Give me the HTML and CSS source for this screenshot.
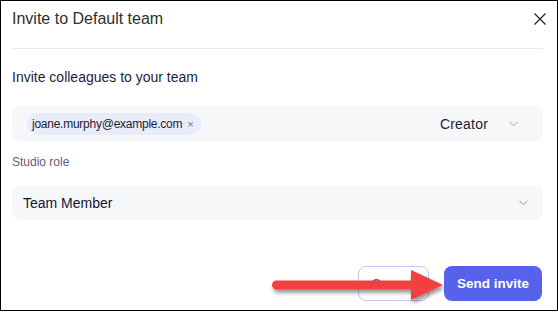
FILE: index.html
```html
<!DOCTYPE html>
<html>
<head>
<meta charset="utf-8">
<link rel="stylesheet" href="styles.css">
</head>
<body>
<div class="dialog">
  <div class="header">
    <h1 class="title">Invite to Default team</h1>
    <button class="close" aria-label="Close">
      <svg width="12" height="12" viewBox="0 0 12 12"><path d="M0.5 0.5 L11.5 11.5 M11.5 0.5 L0.5 11.5" stroke="#222" stroke-width="1.2" fill="none"/></svg>
    </button>
  </div>
  <div class="divider"></div>
  <p class="lead">Invite colleagues to your team</p>
  <div class="field invite-field">
    <span class="chip">joane.murphy@example.com <span class="chip-x">×</span></span>
    <span class="role">Creator</span>
    <svg class="chev chev1" width="9" height="6" viewBox="0 0 9 6"><path d="M0.5 0.8 L4.5 4.8 L8.5 0.8" stroke="#9aa0b0" stroke-width="1" fill="none"/></svg>
  </div>
  <p class="label">Studio role</p>
  <div class="field select-field">
    <span class="value">Team Member</span>
    <svg class="chev" width="9" height="6" viewBox="0 0 9 6"><path d="M0.5 0.8 L4.5 4.8 L8.5 0.8" stroke="#8a90a0" stroke-width="1" fill="none"/></svg>
  </div>
  <div class="footer">
    <button class="btn btn-cancel">Cancel</button>
    <button class="btn btn-send">Send invite</button>
  </div>
  <svg class="arrow" width="558" height="312" viewBox="0 0 558 312">
    <defs>
      <filter id="sh" x="-10%" y="-40%" width="130%" height="190%">
        <feDropShadow dx="1.5" dy="3" stdDeviation="2" flood-color="#000" flood-opacity="0.45"/>
      </filter>
    </defs>
    <g filter="url(#sh)" fill="#f23f3f">
      <path d="M276.5 280.5 H414 V289.5 H276.5 A4.5 4.5 0 0 1 276.5 280.5 Z"/>
      <path d="M411 270 L443 285 L411 300 Z"/>
    </g>
  </svg>
</div>
</body>
</html>
```
FILE: styles.css
```css
html, body {
  margin: 0;
  padding: 0;
  background: #fff;
}
.dialog {
  position: relative;
  box-sizing: border-box;
  width: 558px;
  height: 311px;
  border: 1px solid #000;
  padding: 0 14px 0 11px;
  font-family: "Liberation Sans", Arial, sans-serif;
  background: #fff;
  overflow: hidden;
}
.header {
  height: 36px;
  display: flex;
  align-items: center;
  justify-content: space-between;
}
.title {
  margin: 0;
  font-size: 16px;
  font-weight: normal;
  color: #2f2f2f;
}
.close {
  border: 0;
  background: none;
  padding: 0;
  width: 12px;
  height: 12px;
  margin-right: -3px;
  display: flex;
}
.divider {
  margin-top: 11px;
  height: 1px;
  background: #ececec;
}
.lead {
  margin: 19px 0 0;
  font-size: 14px;
  line-height: 18px;
  color: #1c1d3a;
}
.field {
  box-sizing: border-box;
  height: 35px;
  border-radius: 8px;
  background: #f6f7f9;
  display: flex;
  align-items: center;
}
.invite-field {
  margin-top: 20px;
  padding: 0 25px 0 15px;
}
.chip {
  height: 22px;
  border-radius: 11px;
  background: #e9ecfb;
  display: inline-flex;
  align-items: center;
  padding: 0 7px 0 5px;
  font-size: 12px;
  letter-spacing: -0.25px;
  color: #1b1d33;
  white-space: pre;
}
.chip-x {
  color: #777;
  font-size: 11px;
  margin-left: 2px;
}
.role {
  margin-left: auto;
  font-size: 14px;
  letter-spacing: 0.2px;
  color: #1b1d33;
  margin-right: 21px;
}
.label {
  margin: 13px 0 0;
  font-size: 12px;
  line-height: 16px;
  color: #5e6270;
}
.select-field {
  margin-top: 15px;
  padding: 0 15px 0 11px;
  justify-content: space-between;
}
.value {
  font-size: 14px;
  color: #121533;
}
.footer {
  margin-top: 46px;
  display: flex;
  justify-content: flex-end;
  gap: 15px;
  padding-right: 1px;
}
.btn {
  box-sizing: border-box;
  height: 35px;
  border-radius: 8px;
  font-family: "Liberation Sans", Arial, sans-serif;
  font-size: 13.5px;
  font-weight: bold;
}
.btn-cancel {
  width: 71px;
  background: #fff;
  border: 1px solid #c3c7f8;
  color: #5660e6;
}
.btn-send {
  width: 98px;
  background: #5662eb;
  border: 0;
  color: #fff;
}
.arrow {
  position: absolute;
  left: -1px;
  top: -1px;
  pointer-events: none;
}
```
